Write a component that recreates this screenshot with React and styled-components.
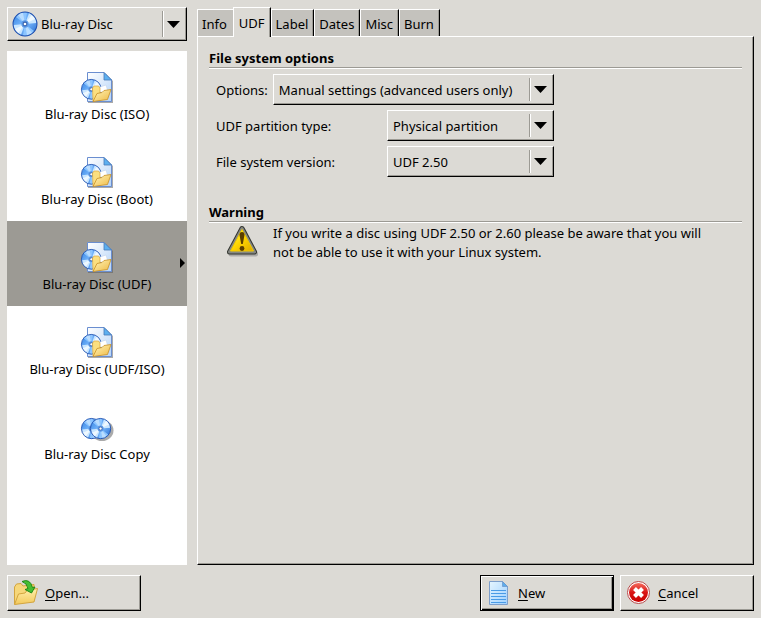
import React, { useState } from 'react';
import styled, { createGlobalStyle, css } from 'styled-components';

const GlobalStyle = createGlobalStyle`
  * {
    box-sizing: border-box;
  }
  body {
    margin: 0;
    background: #dcdad5;
    color: #000;
    font: 13px/19px 'Noto Sans', sans-serif;
  }
  button, select {
    margin: 0;
    color: inherit;
    font: inherit;
  }
`;

// raised GTK style edge
const bevel = css`
  border: 1px solid;
  border-color: #fff #000 #000 #fff;
  box-shadow: inset -1px -1px #9c9a94;
`;

const Window = styled.div`
  display: flex;
  flex-direction: column;
  gap: 10px;
  min-height: 100vh;
  padding: 7px;
`;

const Main = styled.main`
  flex: 1;
  display: flex;
  gap: 10px;
`;

const Sidebar = styled.aside`
  display: flex;
  flex-direction: column;
  flex: none;
  gap: 10px;
  width: 180px;
`;

const ProjectList = styled.ul`
  flex: 1;
  margin: 0;
  padding: 0;
  background: #fff;
  list-style: none;
`;

const ProjectButton = styled.button`
  position: relative;
  display: flex;
  flex-direction: column;
  align-items: center;
  width: 100%;
  height: 85px;
  padding: 20px 0 0;
  border: 0;
  background: ${({ $selected }) => ($selected ? '#9c9a94' : 'transparent')};
  line-height: 22px;
`;

const Marker = styled.svg`
  position: absolute;
  right: 2px;
  top: 37px;
`;

const ComboBox = styled.div`
  position: relative;
  display: flex;
  flex: ${({ $width }) => ($width ? 'none' : '1')};
  width: ${({ $width }) => $width || 'auto'};
  height: 31px;
`;

const ProjectCombo = styled(ComboBox)`
  flex: none;
  height: 34px;
`;

const Select = styled.select`
  ${bevel}
  appearance: none;
  width: 100%;
  padding: ${({ $icon }) => ($icon ? '0 26px 0 33px' : '2px 26px 0 5px')};
  border-radius: 0;
  background: transparent;
`;

const ComboIcon = styled.span`
  position: absolute;
  left: 5px;
  top: 4px;
  display: flex;
  pointer-events: none;
`;

const ComboArrow = styled.span`
  position: absolute;
  top: 4px;
  right: 0;
  bottom: 4px;
  display: flex;
  align-items: center;
  width: 25px;
  padding-left: 4px;
  border-left: 1px solid #9c9a94;
  box-shadow: inset 1px 0 #fff;
  pointer-events: none;
`;

const Notebook = styled.section`
  flex: 1;
  display: flex;
  flex-direction: column;
  min-width: 0;
`;

const TabList = styled.div`
  display: flex;
  align-items: flex-end;
  height: 29px;
`;

const Tab = styled.button`
  height: 27px;
  padding: 2px 5px 0 4px;
  border: 1px solid;
  border-color: #fff #000 transparent #fff;
  border-bottom: 0;
  background: #c4c2bd;
  box-shadow: inset -1px 0 #9c9a94;
  ${({ $beforeSelected }) => $beforeSelected && css`
    padding-right: 6px;
    border-right: 0;
    box-shadow: none;
  `}
  ${({ $selected }) => $selected && css`
    position: relative;
    height: 30px;
    margin-bottom: -1px;
    padding: 1px 5px 0;
    background: #dcdad5;
  `}
`;

const Page = styled.div`
  ${bevel}
  flex: 1;
  padding: 13px 11px 11px;
`;

const Heading = styled.h2`
  margin: 0;
  border-bottom: 1px solid #9c9a94;
  box-shadow: 0 1px #fff;
  font-size: 13px;
  line-height: 17px;
`;

const Form = styled.div`
  display: flex;
  flex-direction: column;
  gap: 5px;
  width: 345px;
  margin-bottom: 27px;
  padding: 6px 0 0 7px;
`;

const Row = styled.div`
  display: flex;
  align-items: center;
  justify-content: space-between;
  gap: 5px;
`;

const Label = styled.label`
  padding-top: 2px;
`;

const Notice = styled.div`
  display: flex;
  gap: 14px;
  padding: 2px 30px 0 16px;

  svg {
    flex: none;
  }
`;

const NoticeText = styled.p`
  margin: 0;
`;

const Footer = styled.footer`
  display: flex;
  gap: 6px;
`;

const ActionButton = styled.button`
  ${bevel}
  display: flex;
  align-items: center;
  gap: 6px;
  width: 134px;
  height: 36px;
  padding: 0 5px;
  background: transparent;
  ${({ $default }) => $default && css`
    margin-left: auto;
    border-color: #000;
    box-shadow: inset 1px 1px #fff, inset -1px -1px #000, inset -2px -2px #9c9a94;
  `}
`;

const Key = styled.span`
  text-decoration: underline;
  text-underline-offset: 2px;
`;

// blades of light on a blue disc, reused by several icons
const DiscShape = ({ id }) => (
  <>
    <defs>
      <linearGradient id={id} x1="0" y1="0" x2="1" y2="1">
        <stop offset="0" stopColor="#2f7fe0" />
        <stop offset=".5" stopColor="#7dbcff" />
        <stop offset="1" stopColor="#1f66cc" />
      </linearGradient>
    </defs>
    <circle cx="12" cy="12" r="11.5" fill={`url(#${id})`} />
    <path d="M12 12 3 5A11 11 0 0 1 14 1ZM12 12 10 23A11 11 0 0 0 21 19Z" fill="#8cc5ff" />
    <path d="M12 12 5 3A11 11 0 0 1 10 1ZM12 12 14 23A11 11 0 0 0 19 21Z" fill="#b9ddff" />
    <path d="M12 12 16 1.500A11 11 0 0 1 23 11ZM12 12 8 22.500A11 11 0 0 1 1 13Z" fill="#c9e6ff" />
    <path d="M12 12 18.500 3A11 11 0 0 1 22 7ZM12 12 5.500 21A11 11 0 0 1 2 17Z" fill="#eef8ff" />
    <circle cx="12" cy="12" r="11.500" fill="none" stroke="#1e4fae" />
    <circle cx="12" cy="12" r="3.500" fill="#5a98e6" />
    <circle cx="12" cy="12" r="1.800" fill="#fff" stroke="#3c65ae" />
  </>
);

const DiscIcon = () => (
  <svg width="26" height="26" viewBox="-0.5 -0.5 25 25" aria-hidden="true">
    <DiscShape id="disc" />
  </svg>
);

const ProjectIcon = ({ id }) => (
  <svg width="34" height="32" viewBox="0 0 34 32" aria-hidden="true">
    <defs>
      <linearGradient id={`${id}-page`} x1="0" y1="0" x2="1" y2="1">
        <stop offset="0" stopColor="#fff" />
        <stop offset="1" stopColor="#b5d4f8" />
      </linearGradient>
      <linearGradient id={`${id}-folder`} x1="0" y1="0" x2="1" y2="1">
        <stop offset="0" stopColor="#fff6bd" />
        <stop offset="1" stopColor="#efb942" />
      </linearGradient>
    </defs>
    <path d="M8 3H26L33 10V32H8Z" fill="#555" opacity=".5" />
    <path d="M7.500 1.500H24L31.500 9V30.500H7.500Z" fill={`url(#${id}-page)`} stroke="#6a8ed0" />
    <path d="M24 1.500V9H31.500Z" fill="#5cb0f0" stroke="#4878b8" strokeWidth=".8" />
    <g transform="translate(1 8) scale(.86)">
      <DiscShape id={`${id}-disc`} />
    </g>
    <path d="M20 16 26 14 28 21H19Z" fill="#fff" stroke="#b8cde8" strokeWidth=".5" />
    <path d="M12.500 17 14 15H18.500L20 17V29L13 30Z" fill="#fbdf80" stroke="#dda63a" strokeWidth=".7" />
    <path d="M13 30.500 17 22.500 22 21.500 24 19.500 31 18.500 27.500 28.500Z" fill={`url(#${id}-folder)`} stroke="#c98f22" strokeWidth=".8" />
  </svg>
);

const CopyIcon = () => (
  <svg width="34" height="32" viewBox="0 0 34 32" aria-hidden="true">
    <ellipse cx="22" cy="19.500" rx="11.500" ry="10.500" fill="#555" opacity=".5" />
    <g transform="translate(1 7) scale(.88)">
      <DiscShape id="copy-back" />
    </g>
    <g transform="translate(10 7) scale(.88)">
      <DiscShape id="copy-front" />
    </g>
  </svg>
);

const WarningIcon = () => (
  <svg width="34" height="34" viewBox="0 0 34 34" aria-hidden="true">
    <defs>
      <linearGradient id="warn" x1="0" y1="0" x2="1" y2="1">
        <stop offset=".3" stopColor="#ffe923" />
        <stop offset=".5" stopColor="#ffd400" />
        <stop offset="1" stopColor="#dca900" />
      </linearGradient>
    </defs>
    <path d="M18 6 30.500 30H6Z" fill="#555" stroke="#555" strokeWidth="5" strokeLinejoin="round" opacity=".35" />
    <path d="M17 4.500 29.500 28H4.500Z" fill="#333" stroke="#33352f" strokeWidth="5" strokeLinejoin="round" />
    <path d="M17 4.500 29.500 28H4.500Z" fill="none" stroke="#858782" strokeWidth="3" strokeLinejoin="round" />
    <path d="M17 5.500 28.500 27H5.500Z" fill="url(#warn)" stroke="#f2c900" strokeLinejoin="round" />
    <path d="M14.500 11Q14.500 8 17 8T19.500 11L17.800 20H16.200Z" fill="#5b3d00" />
    <circle cx="17" cy="24.500" r="2.400" fill="#5b3d00" />
  </svg>
);

const OpenIcon = () => (
  <svg width="26" height="28" viewBox="0 0 26 28" aria-hidden="true">
    <defs>
      <linearGradient id="open-folder" x1="0" y1="0" x2="0" y2="1">
        <stop offset="0" stopColor="#ffefac" />
        <stop offset="1" stopColor="#f3c95b" />
      </linearGradient>
    </defs>
    <path d="M1.500 25V8L3.500 5 8 4.500 10 7 21 5.500V21Z" fill="#f6d77a" stroke="#d3a53f" />
    <path d="M1.500 25.500 5.500 15 12 14 14 11.500 24.500 9.500 21 23Z" fill="url(#open-folder)" stroke="#d3a53f" strokeLinejoin="round" />
    <path d="M9 2.500Q17-1 19.500 8.500L22 8 18.500 14 12 10.500 15 9.500Q14 4 9 2.500Z" fill="#45bd32" stroke="#16820e" strokeWidth=".9" strokeLinejoin="round" />
  </svg>
);

const NewIcon = () => (
  <svg width="26" height="26" viewBox="0 0 26 26" aria-hidden="true">
    <defs>
      <linearGradient id="new-page" x1="0" y1="0" x2="1" y2="1">
        <stop offset="0" stopColor="#e5f5ff" />
        <stop offset="1" stopColor="#9ed0ff" />
      </linearGradient>
    </defs>
    <path d="M3.500 1.500H16.500L21.500 6.500V24.500H3.500Z" fill="url(#new-page)" stroke="#7d9ecb" />
    <path d="M16.500 1.500V6.500H21.500Z" fill="#5dadec" stroke="#6b93c8" strokeWidth=".7" />
    <path d="M5 10.500H20M5 13.500H20M5 16.500H20M5 19.500H20M5 22.500H20" stroke="#4a9be6" />
  </svg>
);

const CancelIcon = () => (
  <svg width="26" height="26" viewBox="0 0 26 26" aria-hidden="true">
    <defs>
      <linearGradient id="cancel" x1="0" y1="0" x2="0" y2="1">
        <stop offset="0" stopColor="#f46a5d" />
        <stop offset=".5" stopColor="#d91515" />
        <stop offset="1" stopColor="#c80000" />
      </linearGradient>
    </defs>
    <circle cx="12.500" cy="12.500" r="11" fill="#fff" stroke="#b74a4a" />
    <circle cx="12.500" cy="12.500" r="9.500" fill="url(#cancel)" />
    <path d="M8.500 8.500 16.500 16.500M16.500 8.500 8.500 16.500" stroke="#fff" strokeWidth="4" />
  </svg>
);

const Combo = ({ as: Box = ComboBox, id, width, icon, label, options }) => (
  <Box $width={width}>
    {icon && <ComboIcon>{icon}</ComboIcon>}
    <Select id={id} aria-label={label} $icon={!!icon}>
      {options.map((option) => (
        <option key={option}>{option}</option>
      ))}
    </Select>
    <ComboArrow>
      <svg width="13" height="7" viewBox="0 0 13 7" aria-hidden="true">
        <path d="M0 0H13L6.500 7Z" />
      </svg>
    </ComboArrow>
  </Box>
);

const projects = [
  'Blu-ray Disc (ISO)',
  'Blu-ray Disc (Boot)',
  'Blu-ray Disc (UDF)',
  'Blu-ray Disc (UDF/ISO)',
  'Blu-ray Disc Copy',
];

const tabs = ['Info', 'UDF', 'Label', 'Dates', 'Misc', 'Burn'];

const App = () => {
  const [project, setProject] = useState(2);
  const [tab, setTab] = useState(1);

  return (
    <>
      <GlobalStyle />
      <Window>
        <Main>
          <Sidebar>
            <Combo
              as={ProjectCombo}
              icon={<DiscIcon />}
              label="Disc type"
              options={['Blu-ray Disc']}
            />
            <ProjectList>
              {projects.map((name, i) => (
                <li key={name}>
                  <ProjectButton
                    type="button"
                    $selected={i === project}
                    aria-pressed={i === project}
                    onClick={() => setProject(i)}
                  >
                    {i === 4 ? <CopyIcon /> : <ProjectIcon id={`project-${i}`} />}
                    {name}
                    {i === project && (
                      <Marker width="5" height="10" viewBox="0 0 5 10" aria-hidden="true">
                        <path d="M0 0 5 5 0 10Z" />
                      </Marker>
                    )}
                  </ProjectButton>
                </li>
              ))}
            </ProjectList>
          </Sidebar>

          <Notebook>
            <TabList role="tablist">
              {tabs.map((name, i) => (
                <Tab
                  key={name}
                  type="button"
                  role="tab"
                  aria-selected={i === tab}
                  $selected={i === tab}
                  $beforeSelected={i === tab - 1}
                  onClick={() => setTab(i)}
                >
                  {name}
                </Tab>
              ))}
            </TabList>
            <Page role="tabpanel">
              <Heading>File system options</Heading>
              <Form>
                <Row>
                  <Label htmlFor="options">Options:</Label>
                  <Combo id="options" options={['Manual settings (advanced users only)']} />
                </Row>
                <Row>
                  <Label htmlFor="partition">UDF partition type:</Label>
                  <Combo id="partition" width="167px" options={['Physical partition']} />
                </Row>
                <Row>
                  <Label htmlFor="version">File system version:</Label>
                  <Combo id="version" width="167px" options={['UDF 2.50', 'UDF 2.60']} />
                </Row>
              </Form>
              <Heading>Warning</Heading>
              <Notice>
                <WarningIcon />
                <NoticeText>
                  If you write a disc using UDF 2.50 or 2.60 please be aware that you will not be
                  able to use it with your Linux system.
                </NoticeText>
              </Notice>
            </Page>
          </Notebook>
        </Main>

        <Footer>
          <ActionButton type="button">
            <OpenIcon />
            <span><Key>O</Key>pen...</span>
          </ActionButton>
          <ActionButton type="button" $default>
            <NewIcon />
            <span><Key>N</Key>ew</span>
          </ActionButton>
          <ActionButton type="button">
            <CancelIcon />
            <span><Key>C</Key>ancel</span>
          </ActionButton>
        </Footer>
      </Window>
    </>
  );
};

export default App;
